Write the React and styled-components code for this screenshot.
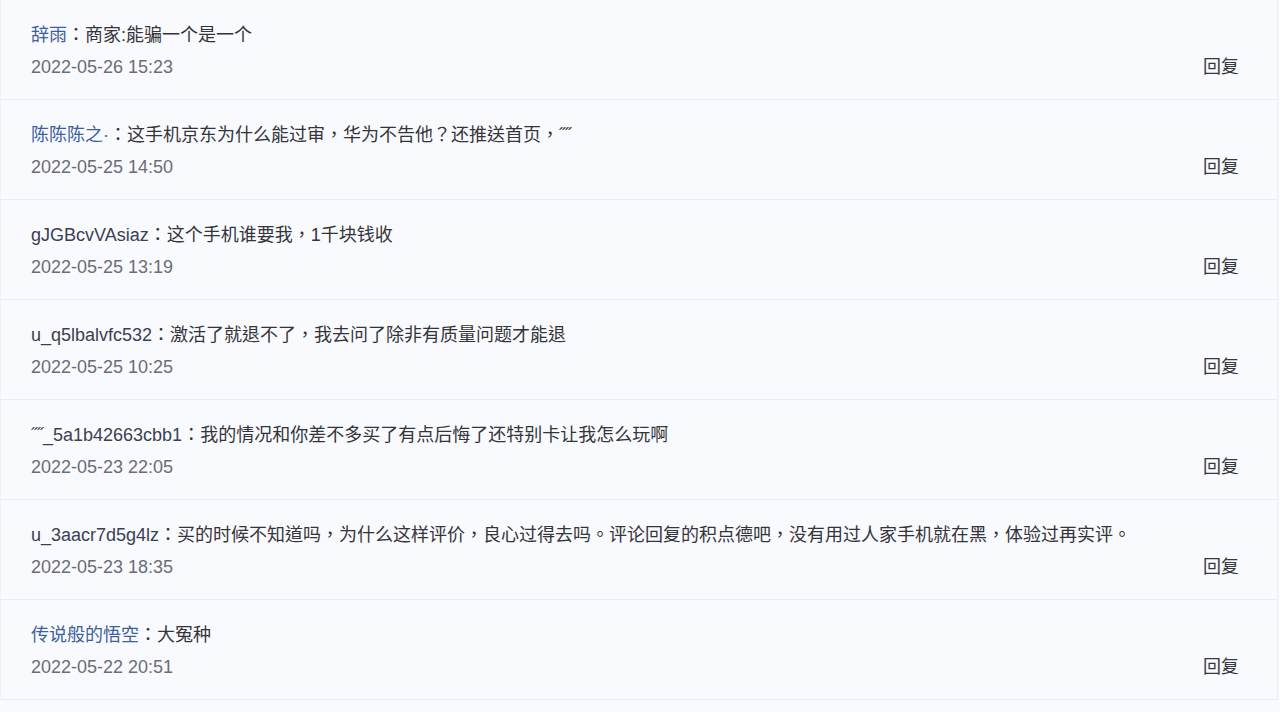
import React from "react";
import styled, { createGlobalStyle } from "styled-components";

const Global = createGlobalStyle`
  html, body { margin: 0; padding: 0; background: #f9fafd; }
  body { font-family: "Liberation Sans", "Noto Sans CJK TC", sans-serif; }
`;

const List = styled.div`
  width: 1276px;
  border-right: 1px solid #eceef4;
  border-left: 1px solid #f1f2f7;
  background: #f9fafd;
`;

const Row = styled.div`
  display: grid;
  grid-template-columns: 1fr auto;
  align-items: end;
  height: 100px;
  box-sizing: border-box;
  padding: 19px 38px 16px 30px;
  border-bottom: 1px solid #e9ecf3;
`;

const Body = styled.div`
  display: flex;
  flex-direction: column;
`;

const Line = styled.div`
  font-size: 18px;
  line-height: 32px;
  color: #34343a;
  white-space: nowrap;
`;

const Name = styled.span`
  color: ${(p) => (p.$blue ? "#3d5f9e" : "#3a4054")};
`;

const Time = styled.div`
  font-size: 18px;
  line-height: 32px;
  color: #6c6c78;
`;

const Reply = styled.span`
  font-size: 18px;
  line-height: 32px;
  color: #38383f;
  cursor: pointer;
`;

const data = [
  { name: "辞雨", blue: true, text: "商家:能骗一个是一个", time: "2022-05-26 15:23" },
  { name: "陈陈陈之·", blue: true, text: "这手机京东为什么能过审，华为不告他？还推送首页，\u02DD\u02DD", time: "2022-05-25 14:50" },
  { name: "gJGBcvVAsiaz", text: "这个手机谁要我，1千块钱收", time: "2022-05-25 13:19" },
  { name: "u_q5lbalvfc532", text: "激活了就退不了，我去问了除非有质量问题才能退", time: "2022-05-25 10:25" },
  { name: "\u02DD\u02DD_5a1b42663cbb1", text: "我的情况和你差不多买了有点后悔了还特别卡让我怎么玩啊", time: "2022-05-23 22:05" },
  { name: "u_3aacr7d5g4lz", text: "买的时候不知道吗，为什么这样评价，良心过得去吗。评论回复的积点德吧，没有用过人家手机就在黑，体验过再实评。", time: "2022-05-23 18:35" },
  { name: "传说般的悟空", blue: true, text: "大冤种", time: "2022-05-22 20:51" },
];

export default function App() {
  return (
    <>
      <Global />
      <List>
        {data.map((d, i) => (
          <Row key={i}>
            <Body>
              <Line>
                <Name $blue={d.blue}>{d.name}</Name>：{d.text}
              </Line>
              <Time>{d.time}</Time>
            </Body>
            <Reply>回复</Reply>
          </Row>
        ))}
      </List>
    </>
  );
}
